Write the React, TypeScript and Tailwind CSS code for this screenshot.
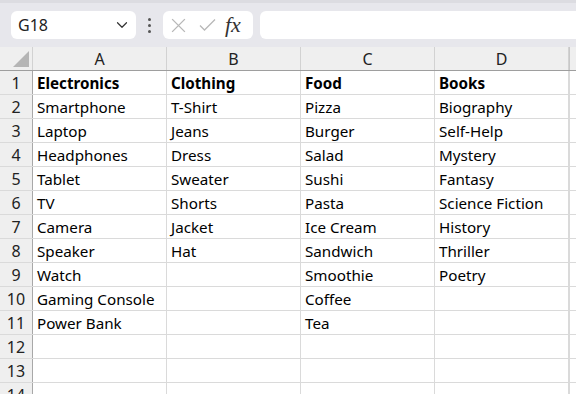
import { ChevronDown } from 'lucide-react';

const COLS = ['A', 'B', 'C', 'D'];

const DATA: string[][] = [
  ['Electronics', 'Clothing', 'Food', 'Books'],
  ['Smartphone', 'T-Shirt', 'Pizza', 'Biography'],
  ['Laptop', 'Jeans', 'Burger', 'Self-Help'],
  ['Headphones', 'Dress', 'Salad', 'Mystery'],
  ['Tablet', 'Sweater', 'Sushi', 'Fantasy'],
  ['TV', 'Shorts', 'Pasta', 'Science Fiction'],
  ['Camera', 'Jacket', 'Ice Cream', 'History'],
  ['Speaker', 'Hat', 'Sandwich', 'Thriller'],
  ['Watch', '', 'Smoothie', 'Poetry'],
  ['Gaming Console', '', 'Coffee', ''],
  ['Power Bank', '', 'Tea', ''],
  ['', '', '', ''],
  ['', '', '', ''],
  ['', '', '', ''],
];

function FormulaBar() {
  return (
    <div className="flex h-[47px] items-center bg-[#e7e7ec] pl-[11px] border-t-[3px] border-[#dcdce1]">
      <div className="flex h-[28px] w-[125px] items-center justify-between rounded-md bg-white pl-[7px] pr-[5px] text-[16px] text-[#222]">
        <span>G18</span>
        <ChevronDown size={18} strokeWidth={1.6} className="text-[#333]" />
      </div>
      <div className="flex w-[27px] flex-col items-center gap-[3px]">
        <span className="h-[3px] w-[3px] rounded-full bg-[#555]" />
        <span className="h-[3px] w-[3px] rounded-full bg-[#555]" />
        <span className="h-[3px] w-[3px] rounded-full bg-[#555]" />
      </div>
      <div className="flex h-[28px] w-[90px] items-center rounded-md bg-white pl-[7px]">
        <svg width="17" height="17" viewBox="0 0 16 16" className="mr-[11px]">
          <path d="M2 2L14 14M14 2L2 14" stroke="#b8b8b8" strokeWidth="1.3" fill="none" />
        </svg>
        <svg width="19" height="16" viewBox="0 0 18 16" className="mr-[8px]">
          <path d="M1.5 8.5L6 13L16.5 2.5" stroke="#b8b8b8" strokeWidth="1.3" fill="none" />
        </svg>
        <span className="font-['Liberation_Serif',serif] text-[22px] italic leading-none text-[#333]">fx</span>
      </div>
      <div className="ml-[7px] h-[28px] flex-1 rounded-l-md bg-white" />
    </div>
  );
}

function Sheet() {
  return (
    <div className="bg-white">
      <div className="flex h-[24px] border-b border-[#9e9e9e] bg-[#efefef]">
        <div className="relative w-[33px] shrink-0 border-r border-[#d2d2d2]">
          <svg width="16" height="16" viewBox="0 0 16 16" className="absolute right-[3px] bottom-[3px]">
            <path d="M16 0L16 16L0 16Z" fill="#b5b5b5" />
          </svg>
        </div>
        {COLS.map((c) => (
          <div
            key={c}
            className="flex w-[134px] shrink-0 items-center justify-center border-r border-[#d2d2d2] pt-px text-[16px] text-[#222]"
          >
            {c}
          </div>
        ))}
        <div className="flex-1 border-l border-[#c8c8c8]" />
      </div>
      {DATA.map((row, i) => (
        <div key={i} className="flex h-[24px] border-b border-[#dadada]">
          <div className="flex w-[33px] shrink-0 items-center justify-center border-r border-[#a8a8a8] bg-[#efefef] pt-px text-[16px] text-[#222]">
            {i + 1}
          </div>
          {row.map((cell, j) => (
            <div
              key={j}
              className={`flex w-[134px] shrink-0 items-center overflow-visible whitespace-nowrap border-r border-[#dadada] pl-[4px] pt-px text-[15.2px] text-black ${
                i === 0 ? 'font-bold' : ''
              }`}
            >
              {cell}
            </div>
          ))}
          <div className="flex-1 border-l border-[#dadada]" />
        </div>
      ))}
    </div>
  );
}

export default function App() {
  return (
    <div className="h-[394px] w-[576px] overflow-hidden bg-white font-['Noto_Sans',sans-serif]">
      <FormulaBar />
      <Sheet />
    </div>
  );
}
